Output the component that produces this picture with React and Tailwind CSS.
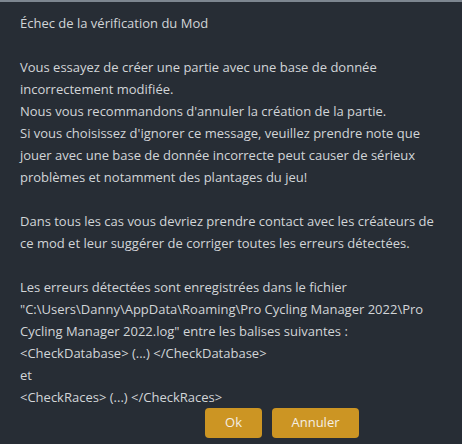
import React from 'react';

const lines = [
  'Échec de la vérification du Mod',
  '',
  'Vous essayez de créer une partie avec une base de donnée',
  'incorrectement modifiée.',
  "Nous vous recommandons d'annuler la création de la partie.",
  "Si vous choisissez d'ignorer ce message, veuillez prendre note que",
  'jouer avec une base de donnée incorrecte peut causer de sérieux',
  'problèmes et notamment des plantages du jeu!',
  '',
  'Dans tous les cas vous devriez prendre contact avec les créateurs de',
  'ce mod et leur suggérer de corriger toutes les erreurs détectées.',
  '',
  'Les erreurs détectées sont enregistrées dans le fichier',
  '"C:\\Users\\Danny\\AppData\\Roaming\\Pro Cycling Manager 2022\\Pro',
  'Cycling Manager 2022.log" entre les balises suivantes :',
  '<CheckDatabase> (...) </CheckDatabase>',
  'et',
  '<CheckRaces> (...) </CheckRaces>',
];

export default function App() {
  return (
    <div
      className="w-[462px] h-[444px] overflow-hidden bg-[#272d35] border-t-2 border-[#7d8690] text-[#d2d5d8]"
      style={{ fontFamily: '"Open Sans", sans-serif' }}
    >
      <div className="pt-[10px] pl-[20px] text-[13px] leading-[22px]">
        {lines.map((l, i) => (
          <div key={i} className="h-[22px] whitespace-pre">{l}</div>
        ))}
      </div>
      <div className="flex gap-[10px] pl-[205px]">
        <button className="w-[57px] h-[30px] rounded-[4px] bg-[#cc9523] text-[#f4efe4] text-[13px]">Ok</button>
        <button className="w-[87px] h-[30px] rounded-[4px] bg-[#cc9523] text-[#f4efe4] text-[13px]">Annuler</button>
      </div>
    </div>
  );
}
